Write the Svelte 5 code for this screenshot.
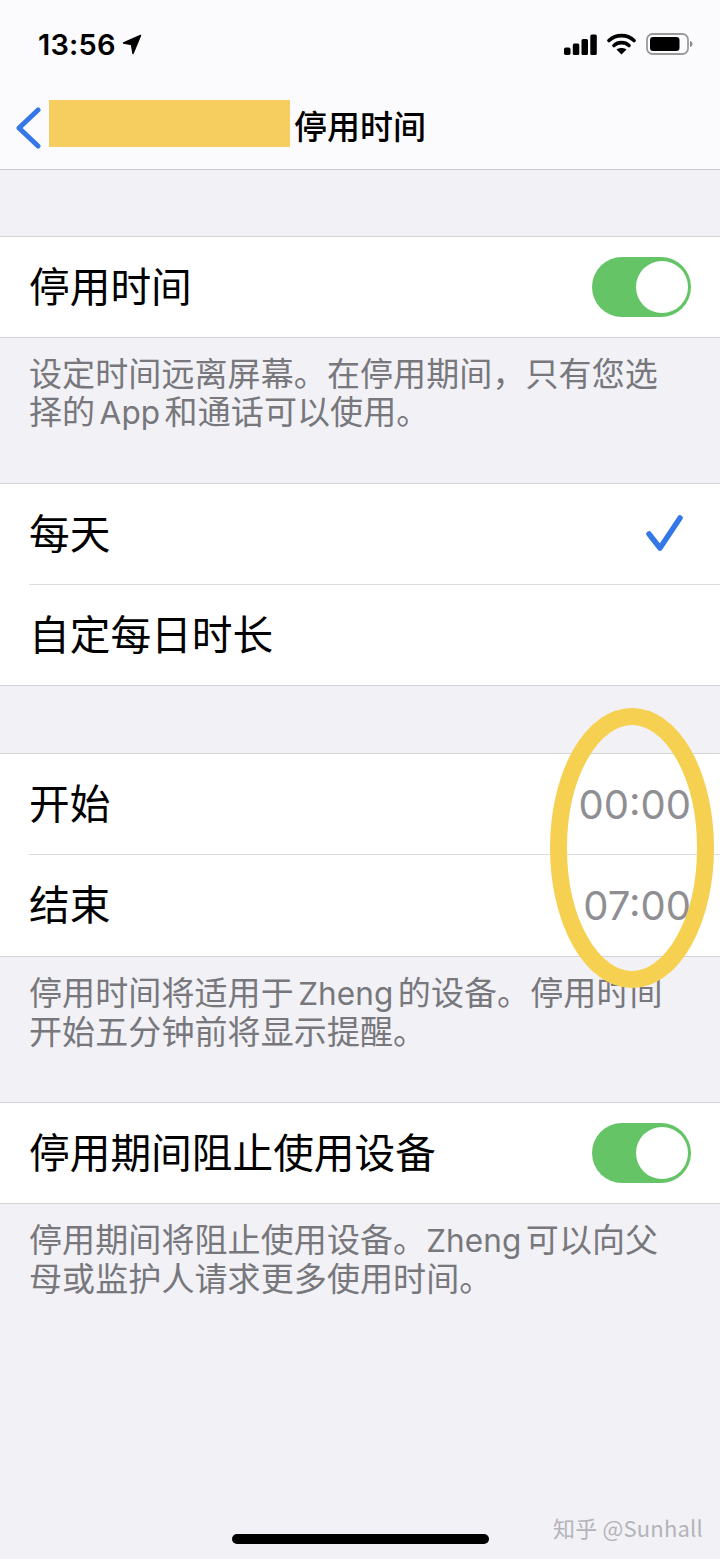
<script lang="ts">
  const title = "停用时间";
</script>

<div class="screen">
  <header class="nav">
    <div class="status">
      <div class="clock">
        <span>13:56</span>
        <svg class="arrow" width="20" height="21" viewBox="0 0 20 21"><path d="M18.500 1.500 L1.500 9 L9.500 10.500 L11 19.500 Z" fill="#000" stroke="#000" stroke-width="1.500" stroke-linejoin="round" /></svg>
      </div>
      <div class="indicators">
        <svg width="33" height="21" viewBox="0 0 33 21">
          <rect x="0" y="13.500" width="6.500" height="7.500" rx="1.800" />
          <rect x="8.800" y="9.500" width="6.500" height="11.500" rx="1.500" />
          <rect x="17.500" y="5" width="6.500" height="16" rx="1.500" />
          <rect x="26.300" y="0.500" width="6.500" height="20.500" rx="1.500" />
        </svg>
        <svg width="29" height="22" viewBox="0 0 29 22">
          <path d="M2 7.500 C9 1 20 1 27 7.500" fill="none" stroke="#000" stroke-width="3.600" stroke-linecap="round" />
          <path d="M7 12.500 C11 8.700 18 8.700 22 12.500" fill="none" stroke="#000" stroke-width="3.600" stroke-linecap="round" />
          <path d="M14.500 21.500 L9.500 16.500 C12 14.500 17 14.500 19.500 16.500 Z" fill="#000" />
        </svg>
        <svg width="47" height="22" viewBox="0 0 47 22">
          <rect x="1" y="1" width="41" height="20" rx="5.500" fill="none" stroke="#9a9a9a" stroke-width="1.800" />
          <rect x="4" y="4" width="29.500" height="14" rx="3.200" fill="#000" />
          <path d="M44 8 C46 8.500 46.500 10 46.500 11 C46.500 12 46 13.500 44 14 Z" fill="#8c8c8c" />
        </svg>
      </div>
    </div>
    <div class="navrow">
      <svg class="back" width="26" height="42" viewBox="0 0 26 42"><path d="M23 3 L4 21 L23 39" fill="none" stroke="#3478e8" stroke-width="5" stroke-linecap="round" stroke-linejoin="round" /></svg>
      <div class="redact"></div>
      <div class="title">{title}</div>
    </div>
  </header>

  <section class="group first">
    <div class="row">
      <span class="label">停用时间</span>
      <div class="switch"><div class="knob"></div></div>
    </div>
  </section>
  <p class="foot">设定时间远离屏幕。在停用期间，只有您选<br />择的 <span class="latin">App</span> 和通话可以使用。</p>

  <section class="group">
    <div class="row">
      <span class="label">每天</span>
      <svg class="check" width="40" height="40" viewBox="0 0 40 40"><path d="M4 20 L15 34 L35 4" fill="none" stroke="#3478e8" stroke-width="5.500" stroke-linecap="round" stroke-linejoin="round" /></svg>
    </div>
    <div class="row sep"><span class="label">自定每日时长</span></div>
  </section>

  <section class="group gap">
    <div class="row">
      <span class="label">开始</span>
      <span class="time">00:00</span>
    </div>
    <div class="row sep">
      <span class="label">结束</span>
      <span class="time">07:00</span>
    </div>
  </section>
  <p class="foot">停用时间将适用于 <span class="latin">Zheng</span> 的设备。停用时间<br />开始五分钟前将显示提醒。</p>

  <section class="group">
    <div class="row">
      <span class="label">停用期间阻止使用设备</span>
      <div class="switch"><div class="knob"></div></div>
    </div>
  </section>
  <p class="foot">停用期间将阻止使用设备。<span class="latin">Zheng</span> 可以向父<br />母或监护人请求更多使用时间。</p>

  <svg class="ring" width="170" height="286" viewBox="0 0 170 286">
    <ellipse cx="85" cy="143" rx="73.500" ry="131.500" fill="none" stroke="#f6d050" stroke-width="17" />
  </svg>

  <div class="home"></div>
  <div class="mark">知乎 @Sunhall</div>
</div>

<style>
  :global(body) {
    margin: 0;
    background: #f1f1f6;
  }

  .screen {
    position: relative;
    height: 1559px;
    overflow: hidden;
    background: #f1f1f6;
    font-family: "Inter", "Noto Sans CJK SC", sans-serif;
    color: #000;
  }

  .nav {
    height: 169px;
    background: #fbfbfd;
    border-bottom: 1px solid #c9c9cc;
  }

  .status {
    display: flex;
    justify-content: space-between;
    align-items: center;
    height: 88px;
    padding: 0 27px 0 38px;
  }

  .clock {
    display: flex;
    align-items: center;
    gap: 6px;
    font-size: 29px;
    font-weight: 600;
    letter-spacing: 0.2px;
  }

  .indicators {
    display: flex;
    align-items: center;
    gap: 10px;
  }

  .navrow {
    display: flex;
    align-items: center;
    height: 47px;
    margin-top: 12px;
    padding-left: 15px;
  }

  .back {
    margin-top: 9px;
  }

  .redact {
    width: 241px;
    height: 47px;
    margin-left: 8px;
    background: #f6cd5f;
  }

  .title {
    margin: 2px 0 0 4px;
    font-size: 33px;
    font-weight: 500;
  }

  .group {
    background: #fff;
    border-top: 1px solid #d3d3d6;
    border-bottom: 1px solid #d3d3d6;
  }

  .group.first {
    margin-top: 66px;
  }

  .group.gap {
    margin-top: 67px;
  }

  .row {
    display: flex;
    justify-content: space-between;
    align-items: center;
    height: 100px;
    margin-left: 29px;
    padding-right: 29px;
    font-size: 40.700px;
  }

  .row.sep {
    border-top: 1px solid #dcdcde;
  }

  .gap .row.sep {
    height: 101px;
  }

  .label {
    margin-top: -6px;
  }

  .check {
    margin-right: 6px;
  }

  .time {
    color: #8e8e93;
    font-size: 40px;
    font-weight: 400;
  }

  .switch {
    position: relative;
    width: 99px;
    height: 60px;
    border-radius: 30px;
    background: #65c466;
  }

  .knob {
    position: absolute;
    top: 4px;
    right: 3px;
    width: 52px;
    height: 52px;
    border-radius: 50%;
    background: #fff;
  }

  .foot {
    margin: 0;
    padding: 17px 0 0 29px;
    height: 145px;
    box-sizing: border-box;
    font-size: 33px;
    letter-spacing: 0.100px;
    word-spacing: -5px;
    line-height: 38px;
    color: #77777c;
  }

  .latin {
    font-size: 31.500px;
  }

  .ring {
    position: absolute;
    left: 547px;
    top: 705px;
  }

  .home {
    position: absolute;
    left: 232px;
    top: 1534px;
    width: 257px;
    height: 10px;
    border-radius: 5px;
    background: #000;
  }

  .mark {
    position: absolute;
    right: 17px;
    top: 1511px;
    font-size: 22px;
    letter-spacing: 0.200px;
    color: #b4b4b8;
    font-family: "Noto Sans CJK SC", sans-serif;
  }
</style>
